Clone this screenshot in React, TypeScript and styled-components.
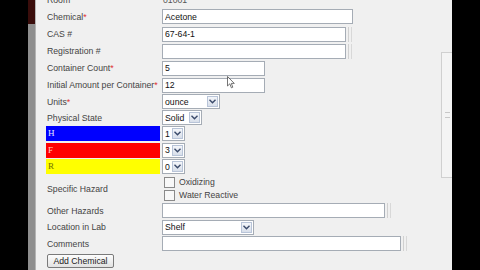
import React from 'react';
import styled, { createGlobalStyle } from "styled-components";

const GlobalStyle = createGlobalStyle`
  html, body {
    margin: 0;
    padding: 0;
    background: #000;
    overflow: hidden;
  }
  body {
    width: 480px;
    height: 270px;
    font-family: "Liberation Sans", Arial, sans-serif;
  }
`

const FONT = `"Liberation Sans", Arial, sans-serif`

type RowDef = {
  label: string
  required?: boolean
  height: number
  bar?: string
  barText?: string
  control: React.ReactNode
}

function Select({ value, width }: { value: string; width: number }) {
  return (
    <FakeSelect $width={width}>
      <SelectValue>{value}</SelectValue>
      <ArrowBox>
        <svg width="7" height="5" viewBox="0 0 7 5">
          <path d="M0.5 0.8 L3.5 3.8 L6.5 0.8" fill="none" stroke="#3a4a6a" strokeWidth="1.4" />
        </svg>
      </ArrowBox>
    </FakeSelect>
  )
}

function App() {
  const rows: Array<RowDef> = [
    { label: "Room", height: 16, control: <Plain>01001</Plain> },
    { label: "Chemical", required: true, height: 17.5, control: <TextBox $width={191} defaultValue="Acetone" /> },
    { label: "CAS #", height: 17, control: <TextBox $width={184} $grip defaultValue="67-64-1" /> },
    { label: "Registration #", height: 17, control: <TextBox $width={184} $grip defaultValue="" /> },
    { label: "Container Count", required: true, height: 17, control: <TextBox $width={103} defaultValue="5" /> },
    { label: "Initial Amount per Container", required: true, height: 17, control: <TextBox $width={103} defaultValue="12" /> },
    { label: "Units", required: true, height: 16, control: <Select value="ounce" width={58} /> },
    { label: "Physical State", height: 16, control: <Select value="Solid" width={40} /> },
    { label: "H", height: 16.5, bar: "#0000ff", barText: "#e8e8ff", control: <Select value="1" width={23} /> },
    { label: "F", height: 16.5, bar: "#ff0000", barText: "#ffd0c0", control: <Select value="3" width={23} /> },
    { label: "R", height: 16.5, bar: "#ffff00", barText: "#707000", control: <Select value="0" width={23} /> },
    {
      label: "Specific Hazard", height: 27, control: (
        <Checks>
          <CheckLine><CheckBox /> Oxidizing</CheckLine>
          <CheckLine><CheckBox /> Water Reactive</CheckLine>
        </Checks>
      )
    },
    { label: "Other Hazards", height: 17, control: <TextBox $width={223} $grip defaultValue="" /> },
    { label: "Location in Lab", height: 16, control: <Select value="Shelf" width={92} /> },
    { label: "Comments", height: 17.5, control: <TextBox $width={239} $grip defaultValue="" /> },
  ]

  return (
    <Screen>
      <GlobalStyle />
      <LeftBlack />
      <Strip>
        <StripTop />
      </Strip>
      <Panel>
        <Form>
          {rows.map((row, i) => (
            <Row key={i} $height={row.height}>
              {row.bar ? (
                <Bar $bg={row.bar} $fg={row.barText || "#fff"}>{row.label}</Bar>
              ) : (
                <Label>
                  {row.label}
                  {row.required && <Star>*</Star>}
                </Label>
              )}
              {row.control}
            </Row>
          ))}
          <ButtonRow>
            <AddButton>Add Chemical</AddButton>
          </ButtonRow>
        </Form>
        <ScrollColumn>
          <ScrollTrack>
            <Grip />
          </ScrollTrack>
        </ScrollColumn>
        {/* mouse pointer caught in the screenshot */}
        <Pointer width="8" height="13" viewBox="0 0 8 13">
          <path d="M0.5 0.5 L0.5 10 L2.8 7.8 L4.4 11.8 L5.8 11.2 L4.3 7.4 L7.3 7.4 Z" fill="#fff" stroke="#333" strokeWidth="0.8" strokeLinejoin="round" />
        </Pointer>
      </Panel>
    </Screen>
  );
}

export default App;

// Styled Components
const Screen = styled.div`
  display: flex;
  width: 480px;
  height: 270px;
  background: #000;
  overflow: hidden;
`

const LeftBlack = styled.div`
  width: 28px;
  flex: none;
  background: #000;
`

const Strip = styled.div`
  width: 7px;
  flex: none;
  background: #8e8e8e;
  border-right: 1px solid #b4b4b4;
  display: flex;
  flex-direction: column;
`

const StripTop = styled.div`
  height: 24px;
  background: #3a0d0b;
`

const Panel = styled.div`
  position: relative;
  width: 416px;
  flex: none;
  background: #f0f0f0;
  display: flex;
`

const Pointer = styled.svg`
  position: absolute;
  left: 191px;
  top: 76px;
  opacity: 0.85;
`

const Form = styled.div`
  flex: 1;
  margin-top: -8px;
  padding-left: 10px;
  display: flex;
  flex-direction: column;
`

const Row = styled.div<{ $height: number }>`
  display: flex;
  align-items: center;
  height: ${p => p.$height}px;
  flex: none;
`

const Label = styled.div`
  width: 116px;
  flex: none;
  padding-left: 1px;
  box-sizing: border-box;
  font-size: 8.7px;
  color: #444;
  white-space: nowrap;
`

const Star = styled.span`
  color: #e03030;
`

const Bar = styled.div<{ $bg: string; $fg: string }>`
  width: 114px;
  height: 15px;
  margin-right: 2px;
  flex: none;
  background: ${p => p.$bg};
  color: ${p => p.$fg};
  font-family: "Liberation Serif", "DejaVu Serif", serif;
  font-size: 9px;
  line-height: 15px;
  padding-left: 2px;
  box-sizing: border-box;
`

const Plain = styled.div`
  font-size: 8.7px;
  color: #555;
  padding-left: 1px;
`

const TextBox = styled.input<{ $width: number; $grip?: boolean }>`
  width: ${p => p.$width}px;
  height: 15px;
  box-sizing: border-box;
  border: 1px solid #a5acb5;
  background: #fff;
  font-family: ${FONT};
  font-size: 8.7px;
  color: #111;
  padding: 0 2px;
  margin: 0;
  outline: none;
  box-shadow: ${p => p.$grip ? "2px 0 0 #f0f0f0, 3px 0 0 #d0d0d0, 5px 0 0 #f0f0f0, 6px 0 0 #d8d8d8" : "none"};
`

const FakeSelect = styled.div<{ $width: number }>`
  width: ${p => p.$width}px;
  height: 15px;
  box-sizing: border-box;
  border: 1px solid #a5acb5;
  background: #fff;
  display: flex;
  align-items: center;
  font-size: 8.7px;
  color: #111;
`

const SelectValue = styled.span`
  flex: 1;
  padding-left: 2px;
  white-space: nowrap;
  overflow: hidden;
`

const ArrowBox = styled.div`
  width: 11px;
  height: 11px;
  margin-right: 1px;
  box-sizing: border-box;
  border: 1px solid #b8c4d8;
  background: linear-gradient(#f4f6fa, #d8dfea);
  display: flex;
  align-items: center;
  justify-content: center;
`

const Checks = styled.div`
  display: flex;
  flex-direction: column;
  padding-left: 2px;
`

const CheckLine = styled.label`
  display: flex;
  align-items: center;
  gap: 4px;
  height: 13px;
  font-size: 8.7px;
  color: #444;
`

const CheckBox = styled.span`
  width: 9px;
  height: 9px;
  border: 1px solid #8a8a8a;
  background: #f8f8f8;
  display: inline-block;
`

const ButtonRow = styled.div`
  height: 16px;
  display: flex;
  align-items: center;
  padding-left: 1px;
`

const AddButton = styled.button`
  height: 14px;
  width: 67px;
  padding: 0;
  font-family: ${FONT};
  font-size: 8.7px;
  color: #222;
  border: 1px solid #7a7a7a;
  border-radius: 2px;
  background: linear-gradient(#fdfdfd, #e2e2e2);
`

const ScrollColumn = styled.div`
  width: 11px;
  flex: none;
  padding-top: 52px;
`

const ScrollTrack = styled.div`
  height: 126px;
  box-sizing: border-box;
  border: 1px solid #d0d0d0;
  border-right: none;
  background: #f4f4f4;
  display: flex;
  align-items: center;
  justify-content: center;
`

const Grip = styled.div`
  width: 5px;
  height: 4px;
  border-top: 1px solid #c8c8c8;
  border-bottom: 1px solid #c8c8c8;
`
